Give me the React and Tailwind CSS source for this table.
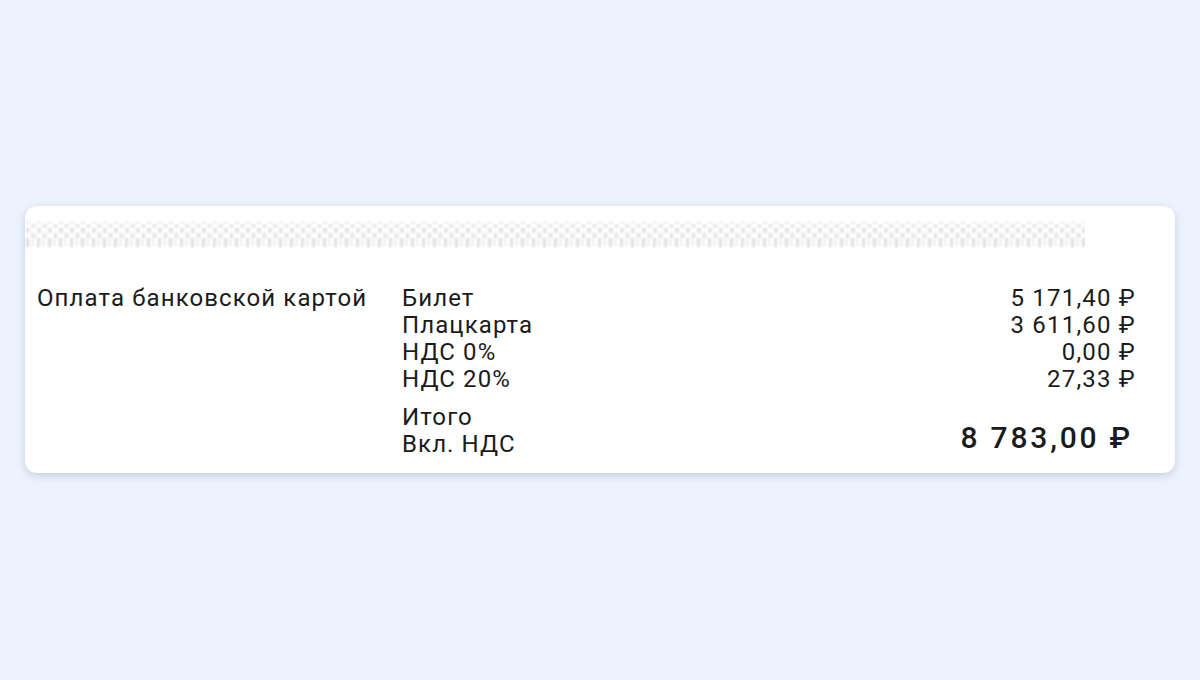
export default function App() {
  const rows = [
    ['Билет', '5 171,40 ₽'],
    ['Плацкарта', '3 611,60 ₽'],
    ['НДС 0%', '0,00 ₽'],
    ['НДС 20%', '27,33 ₽'],
  ]

  return (
    <div className="min-h-[680px] w-[1200px] bg-[#edf3fe] flex flex-col pt-[206px] px-[25px] text-[#1b1b1b]" style={{ fontFamily: 'Roboto, "Noto Sans", sans-serif' }}>
      <div className="bg-white rounded-[12px] shadow-[0_3px_10px_rgba(60,80,120,0.22)] h-[267px] flex flex-col">
        {/* Perforated strip */}
        <svg width="1060" height="30" className="mt-[14px] block">
          <defs>
            <filter id="soft" x="-10%" y="-10%" width="120%" height="120%">
              <feGaussianBlur stdDeviation="1" />
            </filter>
            <pattern id="perf" width="11" height="30" patternUnits="userSpaceOnUse">
              <rect x="1" y="1" width="4" height="3" fill="#efefef" />
              <rect x="6.5" y="4" width="4" height="4" fill="#e6e6e6" />
              <rect x="1" y="8" width="4" height="5" fill="#e2e2e2" />
              <rect x="6.5" y="13" width="4" height="5" fill="#e4e4e4" />
              <rect x="1" y="18" width="3" height="9" fill="#dddddd" />
              <rect x="6.5" y="19" width="2" height="7" fill="#eaeaea" />
            </pattern>
          </defs>
          <rect x="0" y="0" width="1060" height="30" fill="url(#perf)" filter="url(#soft)" />
        </svg>

        <div className="flex pl-[12px] pr-[39px] pt-[35px] text-[24px] leading-[27px] tracking-[1.1px]">
          <div className="w-[365px]">Оплата банковской картой</div>
          <div className="flex-1 flex flex-col">
            {rows.map(([label, value]) => (
              <div key={label} className="flex justify-between">
                <span>{label}</span>
                <span className="tracking-[1.2px]">{value}</span>
              </div>
            ))}
            <div className="flex justify-between items-center mt-[11px]">
              <div className="flex flex-col">
                <span>Итого</span>
                <span>Вкл. НДС</span>
              </div>
              <span className="text-[30px] font-medium leading-[34px] tracking-[2.8px] mr-[3px] mt-[14px]">8 783,00 ₽</span>
            </div>
          </div>
        </div>
      </div>
    </div>
  )
}
